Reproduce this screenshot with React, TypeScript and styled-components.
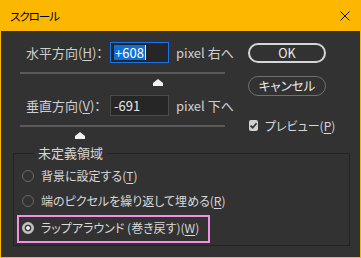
import React from 'react'
import styled, { createGlobalStyle } from 'styled-components'

const GlobalStyle = createGlobalStyle`
  html, body {
    margin: 0;
    padding: 0;
    background: #323232;
  }
  body {
    font-family: 'Noto Sans CJK JP', 'Noto Sans', sans-serif;
    font-feature-settings: 'palt';
    font-size: 13px;
    color: #d4d4d4;
  }
`

const Window = styled.div`
  width: 361px;
  height: 258px;
  box-sizing: border-box;
  border: 1px solid #fcb800;
  border-top: none;
  background: #323232;
  display: flex;
  flex-direction: column;
  overflow: hidden;
`

const TitleBar = styled.div`
  height: 31px;
  flex-shrink: 0;
  background: #fcb800;
  display: flex;
  align-items: center;
  justify-content: space-between;
  padding: 0 10px 0 9px;
  color: #000;
  font-size: 11.5px;
  letter-spacing: -1px;
`

const CloseIcon = styled.svg`
  width: 10px;
  height: 10px;
  display: block;
`

const Main = styled.div`
  display: flex;
  align-items: flex-start;
  padding-top: 11px;
`

const LeftCol = styled.div`
  width: 246px;
  box-sizing: border-box;
  padding-left: 19px;
  display: flex;
  flex-direction: column;
`

const FieldRow = styled.div<{ $gap?: number }>`
  display: flex;
  align-items: center;
  height: 21px;
  padding-left: 6px;
  margin-top: ${(p) => p.$gap ?? 0}px;
  white-space: nowrap;
`

const FieldLabel = styled.span`
  width: 84px;
  color: #cfcfcf;
`

const NumberBox = styled.div<{ $focused?: boolean }>`
  width: 59px;
  height: 21px;
  box-sizing: border-box;
  border: 1px solid ${(p) => (p.$focused ? '#1a73e8' : '#4a4a4a')};
  background: #262626;
  display: flex;
  align-items: center;
  padding-left: 3px;
  color: #e6e6e6;
`

const Selection = styled.span`
  background: #0f6fd6;
  color: #fff;
  padding: 0 1px;
  line-height: 15px;
`

const Caret = styled.span`
  width: 1px;
  height: 15px;
  background: #f0f0f0;
`

const Unit = styled.span`
  margin-left: 7px;
  color: #cfcfcf;
`

const SliderBox = styled.div`
  position: relative;
  width: 205px;
  height: 14px;
  margin-top: 9px;
`

const Track = styled.div`
  height: 2px;
  background: #5a5a5a;
`

const Thumb = styled.svg`
  position: absolute;
  top: 7px;
  width: 10px;
  height: 7px;
  margin-left: -5px;
  display: block;
`

const RightCol = styled.div`
  width: 78px;
  margin-left: 1px;
  display: flex;
  flex-direction: column;
`

const PillButton = styled.button<{ $primary?: boolean; $gap: number }>`
  height: 20px;
  margin-top: ${(p) => p.$gap}px;
  box-sizing: border-box;
  border-radius: 11px;
  border: ${(p) => (p.$primary ? '2px solid #d6d6d6' : '1px solid #707070')};
  background: transparent;
  color: #ececec;
  font-family: inherit;
  font-feature-settings: 'palt';
  font-size: 12.5px;
  padding: 0;
  line-height: 16px;
`

const PreviewRow = styled.label`
  display: flex;
  align-items: center;
  margin-top: 24px;
  margin-left: 1px;
  height: 11px;
  gap: 7px;
  white-space: nowrap;
  font-size: 12px;
  color: #d8d8d8;
`

const CheckBox = styled.span`
  width: 11px;
  height: 11px;
  border-radius: 2px;
  background: #d0d0d0;
  display: flex;
  align-items: center;
  justify-content: center;
`

const Group = styled.fieldset`
  margin: 5px 0 0 12px;
  width: 337px;
  height: 102px;
  box-sizing: border-box;
  border: 1px solid #232323;
  padding: 1px 0 0 3px;
  min-width: 0;
`

const Legend = styled.legend`
  margin-left: 17px;
  padding: 0 4px;
  line-height: 18px;
  color: #d6d6d6;
`

const Option = styled.div<{ $focused?: boolean }>`
  display: flex;
  align-items: center;
  gap: 7px;
  box-sizing: border-box;
  width: fit-content;
  height: ${(p) => (p.$focused ? 28 : 25)}px;
  margin-top: ${(p) => (p.$focused ? 2 : 0)}px;
  padding: 0 ${(p) => (p.$focused ? 9 : 0)}px ${(p) => (p.$focused ? 3 : 0)}px 3px;
  border: 2px solid ${(p) => (p.$focused ? '#f48fe8' : 'transparent')};
  white-space: nowrap;
  font-size: 12px;
  color: #d8d8d8;
`

const Radio = styled.span<{ $checked?: boolean }>`
  width: 12px;
  height: 12px;
  box-sizing: border-box;
  border-radius: 50%;
  border: 1.5px solid ${(p) => (p.$checked ? '#c2c2c2' : '#686868')};
  background: ${(p) =>
    p.$checked
      ? 'radial-gradient(circle at center, #e4e4e4 0 1.7px, #3a3a3a 2.2px 3.2px, #c2c2c2 3.7px)'
      : 'transparent'};
  flex-shrink: 0;
`

const Key = styled.u`
  text-underline-offset: 2px;
`

const Slider = ({ ratio }: { ratio: number }) => (
  <SliderBox>
    <Track />
    <Thumb viewBox="0 0 10 7" style={{ left: `${ratio * 100}%` }}>
      <path d="M0 7 L0 4 L5 0 L10 4 L10 7 Z" fill="#f2f2f2" />
    </Thumb>
  </SliderBox>
)

const options = [
  { text: '背景に設定する', key: 'T' },
  { text: '端のピクセルを繰り返して埋める', key: 'R' },
  { text: 'ラップアラウンド (巻き戻す)', key: 'W', checked: true },
]

export default function App() {
  return (
    <>
      <GlobalStyle />
      <Window>
        <TitleBar>
          <span>スクロール</span>
          <CloseIcon viewBox="0 0 10 10">
            <path d="M0.5 0.5 L9.5 9.5 M9.5 0.5 L0.5 9.5" stroke="#111" strokeWidth="1" />
          </CloseIcon>
        </TitleBar>
        <Main>
          <LeftCol>
            <FieldRow>
              <FieldLabel>
                水平方向(<Key>H</Key>)：
              </FieldLabel>
              <NumberBox $focused>
                <Selection>+608</Selection>
                <Caret />
              </NumberBox>
              <Unit>pixel 右へ</Unit>
            </FieldRow>
            <Slider ratio={0.673} />
            <FieldRow $gap={9}>
              <FieldLabel>
                垂直方向(<Key>V</Key>)：
              </FieldLabel>
              <NumberBox>-691</NumberBox>
              <Unit>pixel 下へ</Unit>
            </FieldRow>
            <Slider ratio={0.293} />
          </LeftCol>
          <RightCol>
            <PillButton $primary $gap={1}>
              OK
            </PillButton>
            <PillButton $gap={13}>キャンセル</PillButton>
            <PreviewRow>
              <CheckBox>
                <svg width="9" height="9" viewBox="0 0 9 9">
                  <path d="M1.5 4.6 L3.6 6.7 L7.6 2.2" fill="none" stroke="#2e2e2e" strokeWidth="1.7" />
                </svg>
              </CheckBox>
              <span>
                プレビュー(<Key>P</Key>)
              </span>
            </PreviewRow>
          </RightCol>
        </Main>
        <Group>
          <Legend>未定義領域</Legend>
          {options.map((o) => (
            <Option key={o.key} $focused={o.checked}>
              <Radio $checked={o.checked} />
              <span>
                {o.text}(<Key>{o.key}</Key>)
              </span>
            </Option>
          ))}
        </Group>
      </Window>
    </>
  )
}
